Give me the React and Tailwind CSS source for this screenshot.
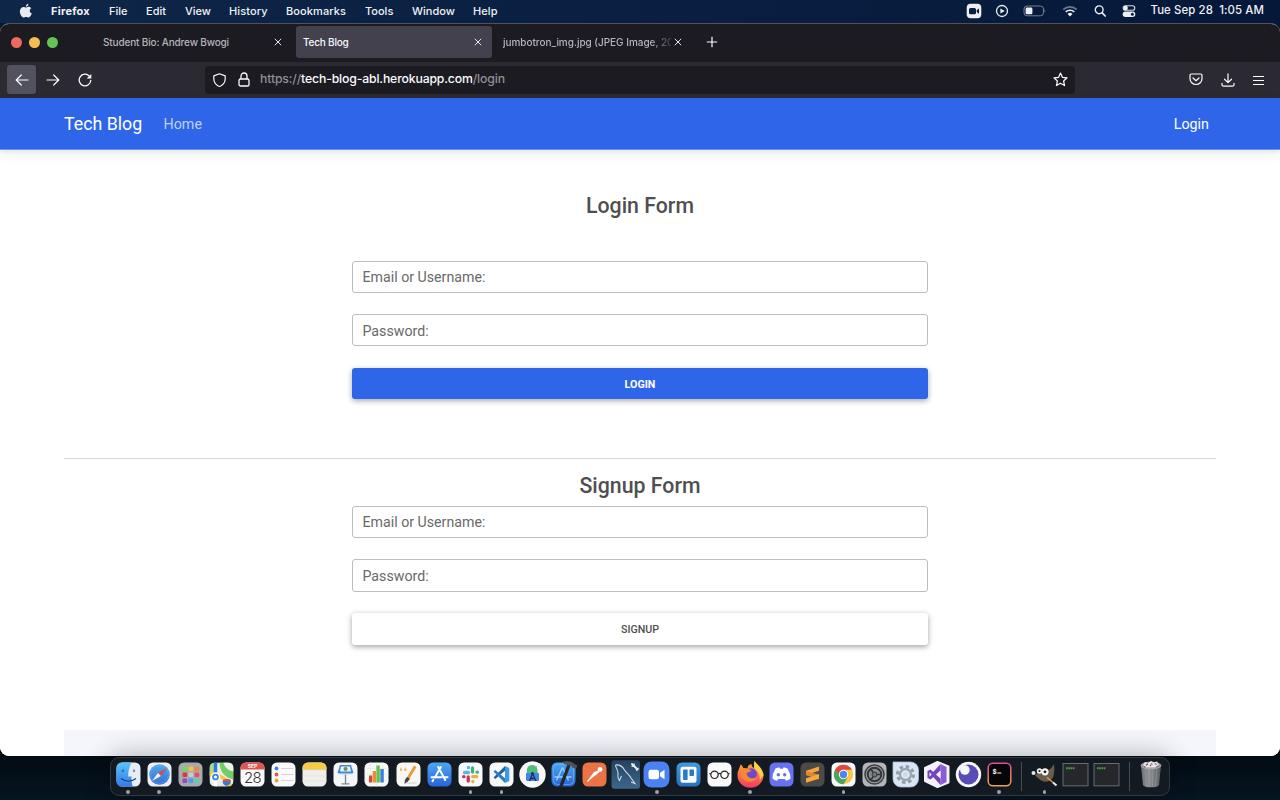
import React from "react";

const MENUS = [
  ["Firefox", "w-[58px] font-bold tracking-[0.25px]"],
  ["File", "w-[37px] font-medium"],
  ["Edit", "w-[39px] font-medium"],
  ["View", "w-[44px] font-medium"],
  ["History", "w-[57px] font-medium tracking-[0.1px]"],
  ["Bookmarks", "w-[79px] font-medium tracking-[0.1px]"],
  ["Tools", "w-[47px] font-medium"],
  ["Window", "w-[61px] font-medium"],
  ["Help", "w-[40px] font-medium tracking-[0.1px]"],
];

function MenuBar() {
  return (
    <header className="flex h-[23px] shrink-0 items-center pb-px pl-[19px] pr-[16px] text-[11px] leading-none text-[#f0f1f4]">
      <svg width="14" height="16" viewBox="0 0 14 16" className="mb-px mr-[18px] shrink-0" fill="#e9ebef">
        <path d="M9.5.8c.1 1.5-1.2 2.9-2.6 2.9C6.700 2.300 8.100.9 9.500.8zM6.900 4.600c.6 0 1.400-.8 2.700-.8 1.200 0 2.200.6 2.700 1.500-2.200 1.300-1.900 4.300.5 5.300-.5 1.500-1.800 3.900-3.200 3.900-.9 0-1.300-.6-2.500-.6s-1.600.6-2.500.6C2.900 14.500.9 11.300.9 8.500c0-2.900 1.800-4.500 3.600-4.500 1.100 0 1.800.6 2.400.6z" />
      </svg>
      {MENUS.map(([name, cls]) => (
        <span key={name} className={cls + " shrink-0 whitespace-nowrap"}>{name}</span>
      ))}
      <div className="ml-auto flex items-center">
        <svg width="16" height="16" viewBox="0 0 16 16" className="mr-[13px]">
          <rect x=".7" y=".7" width="14.600" height="14.600" rx="4" fill="#eceef1" />
          <rect x="3" y="5" width="7" height="6.200" rx="1.500" fill="#0a1f3e" />
          <path d="M10.700 7.200 13 5.400v5.300l-2.300-1.700z" fill="#0a1f3e" />
        </svg>
        <svg width="14" height="14" viewBox="0 0 14 14" className="mr-[14px]">
          <circle cx="7" cy="7" r="5.500" fill="none" stroke="#eceef1" strokeWidth="1.300" />
          <path d="M5.400 4.400v5.200L9.700 7z" fill="#eceef1" />
        </svg>
        <svg width="24" height="12" viewBox="0 0 24 12" className="mr-[15px]">
          <rect x="1" y="1" width="19.500" height="9.800" rx="3" fill="none" stroke="#758093" />
          <rect x="2.600" y="2.600" width="6.800" height="6.600" rx="1.300" fill="#eceef1" />
          <path d="M21.500 4q1.800 1.900 0 3.800z" fill="#758093" />
        </svg>
        <svg width="16" height="12" viewBox="0 0 16 12" className="mr-[15px]" fill="none" strokeWidth="1.700">
          <path d="M1.300 4.600a9.500 9.500 0 0 1 13.400 0" stroke="#6b788d" />
          <path d="M3.700 7a6.200 6.200 0 0 1 8.600 0" stroke="#eceef1" />
          <path d="M5.500 8.900a3.600 3.600 0 0 1 5 0L8 11.500z" fill="#eceef1" />
        </svg>
        <svg width="14" height="14" viewBox="0 0 14 14" className="mr-[15px]" fill="none" stroke="#eceef1">
          <circle cx="6.200" cy="5.800" r="3.900" strokeWidth="1.400" />
          <path d="m9 8.700 3.200 3.300" strokeWidth="1.700" strokeLinecap="round" />
        </svg>
        <svg width="14" height="14" viewBox="0 0 14 14" className="mr-[14px]">
          <rect x="1.200" y="1.700" width="11.600" height="4.600" rx="2.300" fill="none" stroke="#d7dbe2" strokeWidth="1.100" />
          <circle cx="3.700" cy="4" r="2.200" fill="#eceef1" />
          <rect x=".7" y="7.600" width="12.600" height="5.400" rx="2.700" fill="#eceef1" />
          <circle cx="10.400" cy="10.300" r="1.500" fill="#0a1f3e" />
        </svg>
        <span className="w-[114px] whitespace-pre text-right text-[11.400px] font-medium tracking-[0.1px]">Tue Sep 28  1:05 AM</span>
      </div>
    </header>
  );
}

function Cross() {
  return (
    <svg width="8" height="8" viewBox="0 0 8 8" className="mb-px shrink-0" stroke="#e8e8ec" strokeWidth="1">
      <path d="m.8.8 6.400 6.400M7.200.8.800 7.200" />
    </svg>
  );
}

function TabStrip() {
  return (
    <div className="flex h-[38px] shrink-0 items-center bg-[#1c1b22] pb-[2px] text-[10px] text-[#b5b5ba]">
      <div className="flex w-[92px] shrink-0 gap-[7px] pl-[11px]">
        <i className="size-[11px] rounded-full bg-[#ee6a5f]" />
        <i className="size-[11px] rounded-full bg-[#f5bd4f]" />
        <i className="size-[11px] rounded-full bg-[#61c454]" />
      </div>
      <div className="flex h-8 w-[204px] shrink-0 items-center justify-between pl-[11px] pr-[14px]">
        <span className="font-medium tracking-[-0.16px]">Student Bio: Andrew Bwogi</span>
        <Cross />
      </div>
      <div className="flex h-8 w-[196px] shrink-0 items-center justify-between rounded-[3px] bg-[#42414d] pl-[7px] pr-[10px] text-[#f8f8fb]">
        <span className="font-medium tracking-[-0.2px]">Tech Blog</span>
        <Cross />
      </div>
      <div className="flex h-8 w-[200px] shrink-0 items-center pl-[11px]">
        <span className="w-[168px] whitespace-nowrap font-medium tracking-[-0.03px] [mask-image:linear-gradient(to_right,#000_88%,transparent_103%)]">
          jumbotron_img.jpg (JPEG Image, 20
        </span>
        <span className="ml-[3px] shrink-0"><Cross /></span>
      </div>
      <svg width="12" height="12" viewBox="0 0 12 12" className="ml-[14px]" stroke="#fbfbfe" strokeWidth="1.200">
        <path d="M6 .8v10.400M.8 6h10.400" />
      </svg>
    </div>
  );
}

function Toolbar() {
  return (
    <div className="flex h-[36px] shrink-0 items-center bg-[#2b2a33] pb-px pl-[7px] pr-[15px]">
      <div className="flex size-[29px] items-center justify-center rounded-[3px] bg-[#52525e]">
        <svg width="14" height="12" viewBox="0 0 14 12" fill="none" stroke="#fbfbfe" strokeWidth="1.200" strokeLinecap="round" strokeLinejoin="round">
          <path d="M13 6H1.200M6.300 1 1.200 6l5.100 5" />
        </svg>
      </div>
      <svg width="14" height="12" viewBox="0 0 14 12" className="ml-[10px]" fill="none" stroke="#fbfbfe" strokeWidth="1.200" strokeLinecap="round" strokeLinejoin="round">
        <path d="M1 6h11.800M7.700 1l5.100 5-5.100 5" />
      </svg>
      <svg width="14" height="14" viewBox="0 0 14 14" className="ml-[18px]" fill="none" stroke="#fbfbfe" strokeWidth="1.300" strokeLinecap="round">
        <path d="M12.800 7.300A5.800 5.800 0 1 1 11.300 3.100" />
        <path d="M13.300.9v4.600H8.700z" fill="#fbfbfe" stroke="none" />
      </svg>
      <div className="ml-[113px] flex h-[28px] w-[870px] items-center rounded-[3px] bg-[#1c1b22] pl-[8px] pr-[7px]">
        <svg width="13" height="14" viewBox="0 0 13 14" fill="none" stroke="#fbfbfe" strokeWidth="1.200" strokeLinejoin="round">
          <path d="M6.500.8 12.200 2.900v2.500c0 3.400-1.800 6.100-4.500 7.600-.8.400-1.600.4-2.400 0C2.600 11.500.8 8.800.8 5.400V2.900z" />
        </svg>
        <svg width="12" height="15" viewBox="0 0 12 15" className="ml-[12px]" fill="none" stroke="#fbfbfe" strokeWidth="1.300">
          <rect x="1" y="7" width="10" height="7" rx="1.600" />
          <path d="M3 7V4a3 3 0 0 1 6 0v3" />
        </svg>
        <span className="ml-[10px] whitespace-nowrap text-[12.250px] font-medium tracking-[-0.155px] text-[#8f8f96]">
          https://<span className="text-[#fbfbfe]">tech-blog-abl.herokuapp.com</span>/login
        </span>
        <svg width="15" height="15" viewBox="0 0 15 15" className="ml-auto" fill="none" stroke="#fbfbfe" strokeWidth="1.200" strokeLinejoin="round">
          <path d="m7.500 1 1.900 4.300 4.700.5-3.500 3.200 1 4.600-4.100-2.400-4.100 2.400 1-4.600L.9 5.800l4.700-.5z" />
        </svg>
      </div>
      <div className="ml-auto flex items-center gap-[18px]">
        <svg width="14" height="13" viewBox="0 0 14 13" fill="none" stroke="#fbfbfe" strokeWidth="1.200" strokeLinecap="round" strokeLinejoin="round">
          <path d="M2.300 1h9.400c.7 0 1.300.6 1.300 1.300v3.200a6 6 0 0 1-12 0V2.300C1 1.600 1.600 1 2.300 1z" />
          <path d="M4 5l3 2.700L10 5" />
        </svg>
        <svg width="14" height="14" viewBox="0 0 14 14" className="-mr-px" fill="none" stroke="#fbfbfe" strokeWidth="1.200" strokeLinecap="round" strokeLinejoin="round">
          <path d="M7 .8v8.600M3.500 6.200 7 9.600l3.500-3.400M1 10.300v1.400c0 .9.500 1.500 1.400 1.500h9.200c.9 0 1.400-.6 1.400-1.500v-1.400" />
        </svg>
        <svg width="13" height="10" viewBox="0 0 13 10" stroke="#fbfbfe" strokeWidth="1">
          <path d="M1 1.500h11M1 5.500h11M1 9.500h11" />
        </svg>
      </div>
    </div>
  );
}

function Field({ label, className }) {
  return (
    <div className={"flex items-center rounded-[3px] border border-[#bdbdbd] px-[9.500px] text-[14.200px] text-[#696969] " + className}>
      <span>{label}</span>
    </div>
  );
}

function Page() {
  return (
    <div className="flex min-h-0 flex-1 flex-col bg-white font-[Roboto,sans-serif] text-[#4f4f4f]">
      <nav className="flex h-[52px] shrink-0 items-center border-b border-[#6a91f0] bg-[#2f65e9] px-16 text-white shadow-[0_4px_12px_rgba(0,0,0,0.07),0_2px_4px_rgba(0,0,0,0.05)]">
        <span className="w-[99.500px] whitespace-nowrap pt-[2px] text-[17.800px]">Tech Blog</span>
        <span className="pt-[3px] text-[14.300px] text-[#bfd0f8]">Home</span>
        <span className="ml-auto mr-[7px] pt-[3px] text-[14.300px]">Login</span>
      </nav>
      <main className="flex flex-1 flex-col px-16">
        <h2 className="mt-[42px] h-[27px] text-center text-[21.300px] font-medium leading-[27px]">Login Form</h2>
        <form className="mx-auto mt-[42px] w-[576px]">
          <Field label="Email or Username:" className="mb-[21px] h-[32px] pt-px" />
          <Field label="Password:" className="h-[32px] pt-[3px]" />
          <button type="button" className="mt-[22px] block h-[31px] w-full rounded-[3px] bg-[#2f65e9] pt-[3px] text-center text-[10.700px] font-bold leading-[28px] text-white shadow-[0_2px_5px_rgba(0,0,0,0.25),0_2px_8px_rgba(0,0,0,0.1)]">
            LOGIN
          </button>
        </form>
        <hr className="mt-[59px] border-t border-[#d9d9d9]" />
        <h2 className="mt-[14px] h-[27px] text-center text-[21.300px] font-medium leading-[26px]">Signup Form</h2>
        <form className="mx-auto mt-[6px] w-[576px]">
          <Field label="Email or Username:" className="mb-[21px] h-[32px] pt-[2px]" />
          <Field label="Password:" className="h-[33px] pt-[2px]" />
          <button type="button" className="mt-[21px] block h-[32px] w-full rounded-[3px] bg-white pt-[2px] text-center text-[10.700px] font-medium leading-[30px] text-[#4f4f4f] shadow-[0_2px_5px_rgba(0,0,0,0.28),0_1px_8px_rgba(0,0,0,0.1)]">
            SIGNUP
          </button>
        </form>
        <div className="mt-auto h-[26px] shrink-0 bg-[#f5f6fb]" />
      </main>
    </div>
  );
}

const Tile = ({ fill = "#f8f8f8" }) => <rect x="-12" y="-12" width="24" height="24" rx="5.500" fill={fill} />;

const ICONS = [
  { id: "finder", dot: true, art: (
    <>
      <Tile fill="#e5edf5" />
      <path d="M-6.500-12H3C.5-7-.3-3-.3 2H3c0 4 .3 7 1.200 10H-6.500A5.500 5.500 0 0 1-12 6.500v-13A5.500 5.500 0 0 1-6.500-12z" fill="url(#finderBlue)" />
      <path d="M-5.500-5v2.400M5.500-5v2.400" stroke="#24405e" strokeWidth="1.100" />
      <path d="M-7.500 4Q0 9.500 7.500 4" fill="none" stroke="#233b55" strokeWidth="1.100" />
    </>) },
  { id: "safari", dot: true, art: (
    <>
      <Tile fill="#edeff1" />
      <circle r="10.300" fill="url(#safariBlue)" />
      <circle r="8.800" fill="none" stroke="#a8d0f5" strokeWidth=".8" strokeDasharray=".5 1" />
      <path d="m7.500-6.500-6.200 8L-1.500-1.500z" fill="#e5483c" />
      <path d="m-7.500 6.500 6-8L1.300 1.500z" fill="#f3f3f3" />
    </>) },
  { id: "launchpad", art: (
    <>
      <Tile fill="#a8aaae" />
      {[["#6fdc54", -8, -8], ["#f5c13e", -2, -8], ["#ee8a35", 4, -8], ["#d93a34", -8, -2], ["#c7cdd2", -2, -2], ["#ec4a63", 4, -2], ["#9a45c8", -8, 4], ["#4a9cf0", -2, 4], ["#5fd0ad", 4, 4]].map(([c, x, y]) => (
        <rect key={x + "," + y} x={x} y={y} width="4.700" height="4.500" rx="1.200" fill={c} />
      ))}
    </>) },
  { id: "maps", art: (
    <g clipPath="url(#tileClip)">
      <rect x="-12" y="-12" width="24" height="24" fill="#f0ede5" />
      <path d="M-2-12h14v17C4 4-2-3-2-12z" fill="#73cf61" />
      <path d="M2-12c1 5 5 8 10 9v-9z" fill="#eef0eb" />
      <path d="M-12-12h5v14h-5z" fill="#a9dc86" />
      <path d="M-6 3 6 12h-12z" fill="#e7e7e5" />
      <path d="M-12-1Q2 0 10 12" fill="none" stroke="#f4c945" strokeWidth="3.500" />
      <path d="M-6-12V2" stroke="#2b7ae9" strokeWidth="3.500" />
      <path d="M-6 4v8" stroke="#fff" strokeWidth="3" />
      <circle cx="-6" cy="2.500" r="4" fill="#3d7fdc" stroke="#fff" strokeWidth="1.300" />
      <circle cx="-6" cy="2.500" r="1.600" fill="#fff" />
      <path d="M1.500 5.500 5 4.500l4 1c1 3-1 5-4 6-3-1-4.500-3-3.500-6z" fill="#3c76c4" />
      <path d="M1.600 5.300 5 4.300l4 1v1.500H1.500z" fill="#df554b" />
    </g>) },
  { id: "calendar", art: (
    <>
      <Tile fill="#fafafa" />
      <path d="M-6.500-12h13A5.500 5.500 0 0 1 12-6.500V-5h-24v-1.500A5.500 5.500 0 0 1-6.500-12z" fill="#e0564c" />
      <text x="0" y="-6.400" textAnchor="middle" fontSize="5" fontWeight="700" fill="#fff">SEP</text>
      <text x="0" y="8.300" textAnchor="middle" fontSize="15" fontWeight="300" letterSpacing="-.6" fill="#333">28</text>
    </>) },
  { id: "reminders", art: (
    <>
      <Tile fill="#fafafa" />
      {[["#3f7df0", -6], ["#e3574b", 0], ["#eb9d3f", 6]].map(([c, y]) => (
        <g key={y}>
          <circle cx="-7" cy={y} r="1.900" fill={c} />
          <path d={"M-2.500 " + y + "H10"} stroke="#cbcbcb" strokeWidth=".8" />
        </g>
      ))}
    </>) },
  { id: "notes", art: (
    <>
      <Tile fill="#f1efeb" />
      <path d="M-6.500-12h13A5.500 5.500 0 0 1 12-6.500V-5h-24v-1.500A5.500 5.500 0 0 1-6.500-12z" fill="#f6cc46" />
      <path d="M-12-4.600h24" stroke="#c5b98e" strokeWidth=".7" strokeDasharray=".8 .8" />
      <path d="M-12 1.500h24M-12 6.500h24" stroke="#dedcd8" strokeWidth=".6" />
    </>) },
  { id: "keynote", art: (
    <>
      <Tile fill="#f5f6f8" />
      <path d="M-5.500-9.500h11L8-1.500H-8z" fill="#3f86d9" />
      <path d="M-4.500-8h9l1 5h-11z" fill="#edf4fb" />
      <circle cy="-5.500" r="2" fill="#46a55a" />
      <path d="M0-7.500A2 2 0 0 1 2-5.500H0z" fill="#e3653c" />
      <path d="M-7-.9H7" stroke="#9bbfe5" strokeWidth="1.200" />
      <path d="M0 0v9M-4 9.300h8" stroke="#7d8791" strokeWidth="1.300" />
    </>) },
  { id: "numbers", art: (
    <>
      <Tile fill="#f8f8f6" />
      <path d="M-12-6h24M-12 0h24M-12 6h24M-6-12v24M0-12v24M6-12v24" stroke="#e4e6e3" strokeWidth=".6" />
      <path d="M-7.500 1h3.300v7h-3.300z" fill="#d8483a" />
      <path d="M-3.800-3.500h3.300V8h-3.300z" fill="#ee8d35" />
      <path d="M-.1-9h3.400V8H-.1z" fill="#63c04d" />
      <path d="M3.800-5.500h3.500V8H3.800z" fill="#3e80dc" />
    </>) },
  { id: "pages", art: (
    <>
      <Tile fill="#f9f7f3" />
      <path d="M-8.500-4.300q0-2.700 2-3.200-1 .8-.8 1.600 1.300.2 1.100 1.600-1.200 1.300-2.300 0zM-4.300-4.300q0-2.700 2-3.200-1 .8-.8 1.600 1.300.2 1.100 1.600-1.200 1.300-2.300 0z" fill="#eda45a" />
      <path d="M-4 8.500h12" stroke="#d4d2cd" />
      <path d="M5.500-9 8-7.500-.5 6.500-3.500 9-3 5.300z" fill="#e69a3a" />
      <path d="m-1.500 2.500 3 1.700-2 2.600L-4 9.300l.4-3.800z" fill="#42464b" />
    </>) },
  { id: "appstore", art: (
    <>
      <Tile fill="url(#storeBlue)" />
      <path d="M1.300-7.500-4.600 3M-1.300-7.500 5.700 5.500M-8 2.800H2M5 2.800h3M-6.200 5.400-7 6.700" fill="none" stroke="#fff" strokeWidth="2" strokeLinecap="round" />
    </>) },
  { id: "slack", dot: true, art: (
    <>
      <Tile fill="#f9f9f9" />
      <g strokeWidth="3.300" strokeLinecap="round">
        <path d="M-6-2h4" stroke="#4fbde8" /><path d="M-2-7v.2" stroke="#4fbde8" />
        <path d="M2-6.500v4" stroke="#45ad7d" /><path d="M6.600-2.300h.2" stroke="#45ad7d" />
        <path d="M2.300 2.200h4" stroke="#e5b23b" /><path d="M2.300 6.800v.2" stroke="#e5b23b" />
        <path d="M-2.300 2.500v4" stroke="#cf2f5d" /><path d="M-6.800 2.200h.2" stroke="#cf2f5d" />
      </g>
    </>) },
  { id: "vscode", dot: true, art: (
    <>
      <Tile fill="#f8f8f8" />
      <path d="m3.500-8.500 4.300 2v13l-4.300 2z" fill="#3d9be2" />
      <path d="M3.500-8.500v4.700L-6.200 4.500-8 3z" fill="#2563a5" />
      <path d="M3.500 8.500V3.800L-6.200-4.500-8-3z" fill="#2d7bc2" />
    </>) },
  { id: "android", art: (
    <>
      <circle r="13.200" fill="#f8f8f8" />
      <rect x="-6.500" y="-2" width="13" height="8.500" rx="1.500" fill="#4184ec" />
      <path d="M-5.600-1.500V-3.500a5 5 0 0 1 10.500-1.500v3.500z" fill="#50bd75" />
      <path d="m-4-8.500 1.500 2M4.500-8.500 3-6.500" stroke="#50bd75" strokeWidth=".8" />
      <path d="M0-1-3 6.500M0-1 3.500 6.500M-2.200 4h4.600" fill="none" stroke="#16305b" strokeWidth="1.300" />
      <circle cy="-1" r="1.400" fill="#16305b" />
    </>) },
  { id: "xcode", art: (
    <>
      <Tile fill="url(#storeBlue)" />
      <rect x="-10" y="-10" width="20" height="20" rx="4" fill="none" stroke="#75b9f5" strokeWidth=".6" />
      <path d="M-1-7-7 6M-1-7 5 6M-9 2.500H8" fill="none" stroke="#9cd0fa" strokeWidth="1.300" />
      <path d="M5.500-9.500-2.500 11.500" stroke="#24272c" strokeWidth="3.400" strokeLinecap="round" />
      <path d="M0-13c5-.8 9-.3 11.500 3l2.500.8-1.500 3.700-3.500-1.300L8-8.300.500-10.500z" fill="#4d5259" />
    </>) },
  { id: "postman", art: (
    <>
      <Tile fill="#eb7345" />
      <circle cx="5.500" cy="-5" r="2.400" fill="#fff" />
      <path d="M4-4-.5-2.500-5 3.500l1 1L1.500.5 5-2.500z" fill="#fff" />
      <path d="m-7 7 5-5.500" stroke="#fff" strokeWidth="1.200" />
    </>) },
  { id: "mysql", art: (
    <>
      <rect x="-14" y="-14.300" width="28.500" height="28.500" rx="3" fill="url(#mysqlBlue)" />
      <path d="M-10-9.500c4-.5 7 1.500 9 5 2.500 4 4.500 4 6.500 8l4 5.500-4-1.500M-10-9.500c.5 4 2.500 5 2.500 8 0 2-1 5 1.500 7.500l2-4.500" fill="none" stroke="#cfdbe6" strokeWidth="1.100" />
      <path d="m6.500-10.500 5.500 5.500" stroke="#e8eef3" strokeWidth="2" strokeLinecap="round" fill="none" />
      <path d="m6-8.200 2.500-.2.200-2.600M10.500-4l2.500-2.500" stroke="#e8eef3" strokeWidth="1.200" fill="none" />
    </>) },
  { id: "zoom", dot: true, art: (
    <>
      <rect x="-13" y="-13" width="26" height="26" rx="8" fill="#4a82f2" />
      <rect x="-8" y="-4.800" width="10.500" height="9.600" rx="2.200" fill="#fff" />
      <path d="M3.500-1.800 8-4.700v9.400L3.500 1.800z" fill="#fff" />
    </>) },
  { id: "trello", art: (
    <>
      <Tile fill="url(#trelloBlue)" />
      <rect x="-8" y="-7.800" width="16" height="16" rx="2" fill="#f8fafc" />
      <rect x="-5.400" y="-5" width="4.500" height="10.500" rx=".7" fill="#2b78c4" />
      <rect x="1" y="-5" width="4.500" height="6.500" rx=".7" fill="#2b78c4" />
    </>) },
  { id: "goggles", art: (
    <>
      <Tile fill="#fafafa" />
      <g fill="none" stroke="#232323" strokeWidth="1.200">
        <circle cx="-5" cy=".3" r="3.700" /><circle cx="5" cy=".3" r="3.700" />
        <path d="M-1.300-.7Q0-1.700 1.300-.7M-8.700-.3-10-1.200M8.700-.3 10-1.200" />
      </g>
    </>) },
  { id: "firefox", dot: true, art: (
    <>
      <path d="M4-13.500C6-10 12.800-6 13 1A13 12.200 0 0 1-13 1c0-5 2-7 3-11 1.500.5 2.200 2 2.800 3.500L-3-6C-3-9-1-10 1-10.500c0 2 1 3 2.500 4z" fill="url(#foxFire)" />
      <circle cx=".5" cy="-.2" r="6" fill="#7148cc" />
      <path d="M-9-5C-4-7-1-6 1-3.500-1-3-1.500-2-4-1.500-3.500 4 3.500 6 7 1 6 8-6 10-9 2z" fill="#f58a31" />
      <path d="M4-13.500C6-10 12.800-6 13 1L9 6c1-5-1-8-4-11-2-2.500-2-6-1-8.500z" fill="#fddc49" opacity=".85" />
    </>) },
  { id: "discord", art: (
    <>
      <Tile fill="#6772ee" />
      <path d="M-6-6q2.500-1.200 4-1l.6 1.200h2.800L2-7q1.500-.2 4 1 3.200 5 3 10-2 1.800-4.500 2.200L3.300 4.400h-6.600l-1.200 1.800Q-7 5.800-9 4q-.2-5 3-10z" fill="#fff" />
      <circle cx="-3.200" cy=".2" r="1.700" fill="#6772ee" /><circle cx="3.200" cy=".2" r="1.700" fill="#6772ee" />
    </>) },
  { id: "sublime", art: (
    <>
      <Tile fill="#4a4a49" />
      <path d="M-6.500-3.800 6.500-8v4.300L-6.500.6z" fill="#f3a43a" />
      <path d="M-6.500-3.600 6.500.3v4.500L-6.500.7z" fill="#e2862b" />
      <path d="M-6.500 3.800 6.500-.2v4.500L-6.500 8.200z" fill="#f5a93c" />
    </>) },
  { id: "chrome", dot: true, art: (
    <>
      <Tile fill="#f8f8f8" />
      <circle r="9.700" fill="#f5c944" />
      <path d="M-8.400-4.850A9.700 9.700 0 0 0 0 9.700L4.200 2.400 0 0z" fill="#4aa55b" />
      <path d="M-8.400-4.850A9.700 9.700 0 0 1 8.400-4.850H0L-4 1z" fill="#dc4b3e" />
      <circle r="4.700" fill="#fff" /><circle r="3.700" fill="#4a86ef" />
    </>) },
  { id: "settings", art: (
    <>
      <Tile fill="#b2b6b8" />
      <circle r="9.500" fill="#a5a8aa" stroke="#3c3f43" strokeWidth="1.600" />
      <circle r="6.800" fill="#898c8f" stroke="#34373a" strokeWidth="2" />
      <path d="M0 0h7M0 0l-4-6M0 0l-4 6" stroke="#34373a" strokeWidth="1.600" />
      <circle r="2.500" fill="#707376" stroke="#34373a" />
    </>) },
  { id: "gear", art: (
    <>
      <path d="M-12.500-12.500H5A8 8 0 0 1 13-4.500V4.500A8 8 0 0 1 5 12.500H-4.500A8 8 0 0 1-12.500 4.500z" fill="#dbe6f5" stroke="#a9bedb" strokeWidth=".8" />
      <circle r="8" fill="none" stroke="#929eac" strokeWidth="3" strokeDasharray="3.500 2.780" />
      <circle r="5.500" fill="#e4e9ef" stroke="#9ba6b4" strokeWidth="2.400" />
      <circle r="2.500" fill="#cfd9e6" />
    </>) },
  { id: "visualstudio", art: (
    <>
      <path d="M1-12.500 12-8V8L1 12.500-11.500 6.500v-13z" fill="#f5f1fa" stroke="#f5f1fa" strokeWidth="2" strokeLinejoin="round" />
      <path d="m4-10.500 6 3v15l-6 3z" fill="#8b5cd5" />
      <path d="M4-10.500v6.500L-6 5-9 3.500v-7L-6-5 4 4v6.500L-3.300 2.600-6 4.500v-9l2.700 1.900z" fill="#7444bb" />
      <path d="M-7-2.200v4.400L-4.800 0zM4-3.500 0 0l4 3.500z" fill="#f5f1fa" />
    </>) },
  { id: "insomnia", art: (
    <>
      <circle r="12.700" fill="#f8f8fb" />
      <circle r="10" fill="#584cb7" />
      <circle cx="-3.600" cy="-4.500" r="4.800" fill="#f8f8fb" />
    </>) },
  { id: "hyper", dot: true, art: (
    <>
      <rect x="-11.300" y="-11.300" width="22.600" height="22.600" rx="4.500" fill="#060608" stroke="url(#hyperRing)" strokeWidth="1.500" />
      <text x="-7" y="-.8" fontSize="6.500" fontWeight="700" fill="#fff">$</text>
      <path d="M-2.200-1.500h4" stroke="#fff" strokeWidth="1" />
    </>) },
];

const SHELL = (
  <>
    <rect x="-12.500" y="-11" width="25" height="22.300" fill="#25272a" stroke="#686b70" strokeWidth="1" />
    <path d="M-9.500-6.200h9" stroke="#49964c" strokeWidth="2" strokeDasharray="1.700 .5" />
  </>
);

const RECENT = [
  { id: "gimp", dot: true, art: (
    <g transform="translate(-.5 0)">
      <path d="M10-10.500Q11-3 9 3 4 9.500-3 6L-9 1-4-5 3-4q4-1 7-6.500z" fill="#675e4c" />
      <circle cx="-10.500" cy="-1.500" r="2" fill="#e5e7e9" />
      <circle cx="-4.500" cy="-3.500" r="2.700" fill="#f5f5f5" /><circle cx="1" cy="-2.700" r="3.600" fill="#f5f5f5" />
      <circle cx="-4.500" cy="-3.500" r="1.100" fill="#1c1c1c" /><circle cx="1" cy="-2.700" r="1.400" fill="#1c1c1c" />
      <path d="m3 3 6 5" stroke="#dd9b4e" strokeWidth="1.600" /><path d="m9 8 3.500 3" stroke="#eee" strokeWidth="2" />
    </g>) },
  { id: "shell-1", art: SHELL },
  { id: "shell-2", art: SHELL },
];

const TRASH = { id: "trash", art: (
  <g transform="translate(-1.500 0)">
    <path d="M-10-9H10L8 10.500Q7 12.800 0 12.800T-8 10.500z" fill="url(#binGrey)" />
    <path d="M-6-6-4.500 12M-2-6l.5 18M2-6l-.5 18M6-6 4.500 12" stroke="#a1a4a7" strokeWidth=".5" />
    <ellipse cy="-9" rx="10" ry="3.300" fill="#8e9194" stroke="#b5b7b9" strokeWidth=".8" />
    <path d="m-8-9.500 2-3 3 1 3-2 3 1.500 3-1 2 3.500-4 2.500h-9z" fill="#e6e7e8" />
    <path d="m-5-9.500 2-1M4-11l1.500 1M-1-8.500l1-1" stroke="#b84a48" strokeWidth="1.400" />
    <path d="m0-11 1.500 1M-7-8l1.500.5M5.500-8 7-8.500" stroke="#4b6c91" strokeWidth="1.200" />
  </g>) };

function DockIcon({ icon }) {
  return (
    <div className="flex w-[31.110px] shrink-0 flex-col items-center pt-px">
      <svg width="31" height="31" viewBox="-15.500 -15.500 31 31" className="-mx-1 shrink-0 overflow-visible">{icon.art}</svg>
      {icon.dot && <i className="size-[3.500px] rounded-full bg-[#9da1a5]" />}
    </div>
  );
}

function Gradient({ id, from, to }) {
  return (
    <linearGradient id={id} x1="0" y1="0" x2="0" y2="1">
      <stop stopColor={from} /><stop offset="1" stopColor={to} />
    </linearGradient>
  );
}

function Divider() {
  return <div className="flex w-[14.500px] shrink-0 justify-center pt-[4px]"><i className="h-[29px] w-px bg-[#474d53]" /></div>;
}

function Dock() {
  return (
    <footer className="relative ml-[110px] mt-px flex h-[39px] w-[1059.500px] shrink-0 rounded-[9px] border border-[#31383e] bg-[#131a21] pl-[1.500px] font-[Inter,sans-serif] shadow-[0_0_28px_rgba(0,0,0,0.32)]">
      <svg width="0" height="0" className="absolute">
        <defs>
          <Gradient id="finderBlue" from="#55c5f7" to="#3479ee" />
          <Gradient id="safariBlue" from="#4aa9ef" to="#3670d6" />
          <Gradient id="storeBlue" from="#4da7f1" to="#2765da" />
          <Gradient id="mysqlBlue" from="#25425f" to="#3b678c" />
          <Gradient id="trelloBlue" from="#4098e3" to="#2870bd" />
          <Gradient id="foxFire" from="#ffad32" to="#f23a63" />
          <Gradient id="hyperRing" from="#e64a9b" to="#eda24a" />
          <linearGradient id="binGrey"><stop stopColor="#707376" /><stop offset=".4" stopColor="#8e9194" /><stop offset="1" stopColor="#5b5e61" /></linearGradient>
          <clipPath id="tileClip"><rect x="-12" y="-12" width="24" height="24" rx="5.500" /></clipPath>
        </defs>
      </svg>
      {ICONS.map((icon) => <DockIcon key={icon.id} icon={icon} />)}
      <Divider />
      {RECENT.map((icon) => <DockIcon key={icon.id} icon={icon} />)}
      <Divider />
      <DockIcon icon={TRASH} />
    </footer>
  );
}

export default function App() {
  return (
    <div className="flex h-[800px] w-[1280px] flex-col overflow-hidden bg-[linear-gradient(to_right,#0e2648,#05183a)] font-[Inter,sans-serif]">
      <MenuBar />
      <div className="flex min-h-0 flex-1 flex-col bg-[linear-gradient(to_bottom,#07182f_0,#07182f_60px,#030a12_730px,#061522_100%)]">
        <div className="flex h-[733px] shrink-0 flex-col overflow-hidden rounded-[9px] border-t border-[#515158] bg-white">
          <TabStrip />
          <Toolbar />
          <Page />
        </div>
        <Dock />
      </div>
    </div>
  );
}
